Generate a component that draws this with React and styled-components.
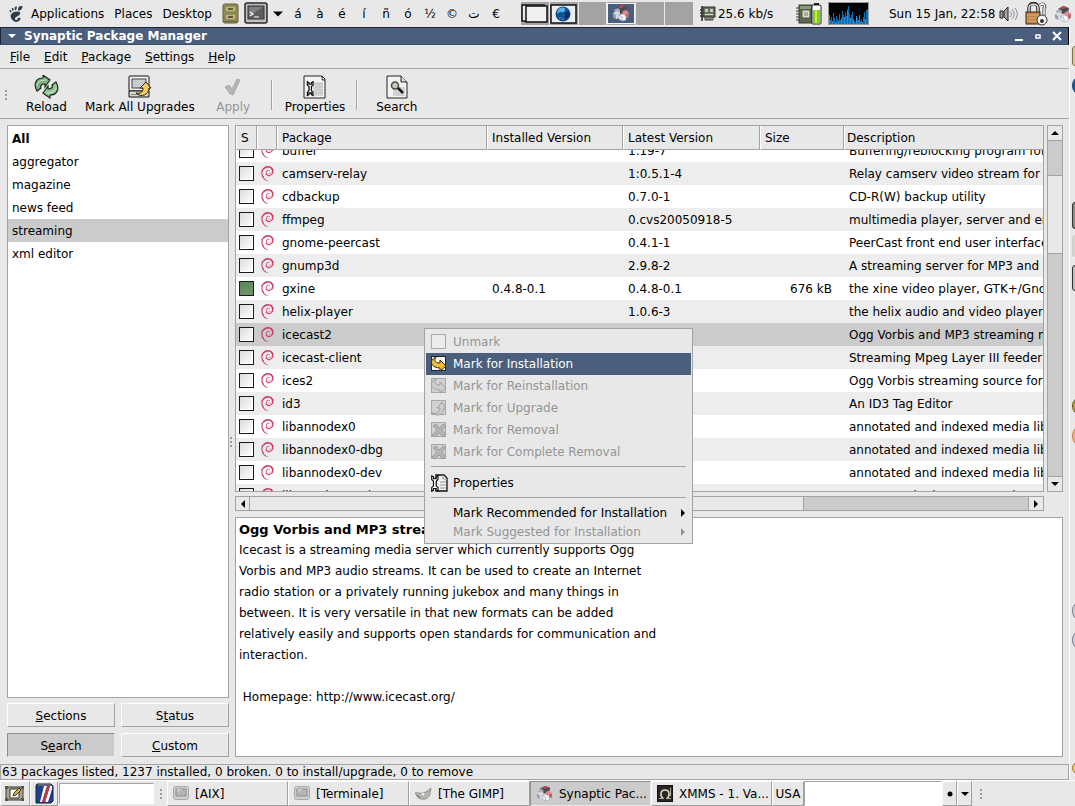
import React, { useLayoutEffect, useRef } from "react";
import styled, { createGlobalStyle, css } from "styled-components";
import { SiDebian, SiGnome } from "react-icons/si";

const c = {
  bg: "#e8e8e8",
  line: "#a3a3a3",
  navy: "#4a5f7e",
  sel: "#cbcbcb",
  dim: "#949494",
};

const Global = createGlobalStyle`
  * { box-sizing: border-box; }
  body { margin: 0; background: ${c.bg}; }
  body, button, input, table {
    font-family: "DejaVu Sans", "Bitstream Vera Sans", sans-serif;
    font-size: 12px;
    line-height: 16px;
    color: #000;
  }
  button { margin: 0; padding: 0; border: 0; background: none; }
  svg { display: block; flex: none; }
  u { text-underline-offset: 1px; }
`;

const Screen = styled.div`
  position: relative;
  display: flex;
  flex-direction: column;
  height: 100vh;
  min-height: 600px;
  overflow: hidden;
`;

/* ---------- panels ---------- */
const Panel = styled.div`
  display: flex;
  flex: none;
  align-items: center;
  height: 27px;
  white-space: nowrap;
  overflow: hidden;
`;
const TopPanel = styled(Panel)`
  padding: 0 2px 0 8px;
`;
const PanelMenu = styled.nav`
  display: flex;
  gap: 10px;
  margin: 0 10px 0 7px;
`;
const Launcher = styled.button`
  margin-right: 5px;
`;
const CharPalette = styled.div`
  display: flex;
  margin-left: 4px;
  button { width: 22px; }
`;
const Pager = styled.div`
  display: flex;
  gap: 1px;
  margin-left: 14px;
  width: 172px;
  height: 23px;
  background: ${c.bg};
`;
const Desk = styled.button`
  flex: 1;
  display: flex;
  align-items: center;
  justify-content: center;
  background: #a3a3a3;
`;
const NetMonitor = styled.span`
  display: flex;
  align-items: center;
  gap: 2px;
  width: 96px;
  margin-left: 7px;
`;
const Clock = styled.time`
  margin: 0 4px 0 20px;
`;
const Tray = styled.div`
  display: flex;
  align-items: center;
  gap: 6px;
`;

/* ---------- window ---------- */
const Workspace = styled.div`
  position: relative;
  display: flex;
  flex: 1;
  min-height: 0;
`;
const Window = styled.main`
  display: flex;
  flex: 1;
  flex-direction: column;
  min-width: 0;
`;
const TitleBar = styled.header`
  display: flex;
  align-items: center;
  height: 18px;
  padding: 0 5px 0 7px;
  background: ${c.navy};
  border-top: 1px solid #1c2634;
  border-bottom: 1px solid #3e506b;
  border-left: 1px solid #1c2634;
  border-right: 1px solid #000;
  color: #fff;
  h1 {
    flex: 1;
    margin: 0 0 0 8px;
    font-size: 12px;
    line-height: 16px;
  }
  button { margin-left: 8px; }
`;
const MenuBar = styled.nav`
  display: flex;
  align-items: center;
  gap: 14px;
  height: 24px;
  padding: 1px 10px 0;
  border-bottom: 1px solid ${c.line};
`;
const Toolbar = styled.div`
  display: flex;
  align-items: center;
  height: 50px;
  padding: 2px 0 0 4px;
  border-bottom: 1px solid ${c.line};
`;
const ToolButton = styled.button`
  display: flex;
  flex-direction: column;
  align-items: center;
  min-width: 65px;
  padding: 0 6px;
  &:disabled { color: ${c.dim}; }
`;
const ToolSeparator = styled.div`
  width: 2px;
  height: 30px;
  margin: 0 6px 0 5px;
  border-left: 1px solid ${c.line};
  border-right: 1px solid #f6f6f6;
`;
const Grip = styled.div`
  width: ${(p) => p.$width || 10}px;
  height: 11px;
  flex: none;
  background: radial-gradient(circle at 2px 2px, #9a9a9a 1px, transparent 1px) 0 0 / 3px 4px repeat-y;
`;
const Body = styled.div`
  display: flex;
  flex: 1;
  min-height: 0;
  padding: 6px 6px 7px 7px;
`;
const Splitter = styled.div`
  display: flex;
  align-items: center;
  flex: none;
  width: 6px;
`;
const Sidebar = styled.aside`
  display: flex;
  flex: none;
  flex-direction: column;
  gap: 5px;
  width: 222px;
`;
const CategoryList = styled.ul`
  flex: 1;
  margin: 0;
  padding: 1px 0;
  list-style: none;
  background: #fff;
  border: 1px solid ${c.line};
`;
const Category = styled.button`
  display: block;
  width: 100%;
  height: 23px;
  padding: 0 4px;
  text-align: left;
  font-weight: ${(p) => (p.$bold ? "bold" : "normal")};
  background: ${(p) => (p.$active ? c.sel : "transparent")};
`;
const Filters = styled.div`
  display: grid;
  grid-template-columns: 1fr 1fr;
  gap: 6px;
`;
const bevel = css`
  border: 1px solid;
  border-color: #fff #a0a0a0 #a0a0a0 #fff;
`;
const FilterButton = styled.button`
  height: 24px;
  padding-top: 2px;
  ${bevel}
  background: ${c.bg};
  &[aria-pressed="true"] {
    background: ${c.sel};
    border-color: #8e8e8e #e8e8e8 #e8e8e8 #8e8e8e;
  }
`;
const Content = styled.section`
  display: flex;
  flex: 1;
  flex-direction: column;
  gap: 6px;
  min-width: 0;
`;
const ListGrid = styled.div`
  display: grid;
  flex: 1;
  grid-template: minmax(0, 1fr) 15px / minmax(0, 1fr) 16px;
  gap: 4px 3px;
  min-height: 0;
`;
const TableView = styled.div`
  overflow: hidden;
  background: #fff;
  border: 1px solid ${c.line};
`;
const Table = styled.table`
  width: 100%;
  table-layout: fixed;
  border-spacing: 0;
  th, td {
    overflow: hidden;
    height: 23px;
    padding: 0 0 0 5px;
    white-space: nowrap;
    text-align: left;
    font-weight: normal;
  }
  thead th {
    position: sticky;
    top: 0;
    z-index: 1;
    height: 24px;
    padding-top: 1px;
    padding-left: 4px;
    background: ${c.bg};
    border-right: 1px solid ${c.line};
    border-bottom: 1px solid ${c.line};
    border-left: 1px solid #fff;
  }
  thead th:last-child { padding-left: 2px; border-right: 0; }
  td:nth-child(-n + 2) { padding-left: 3px; }
  td:nth-child(6) { padding-right: 12px; text-align: right; }
`;
const Row = styled.tr`
  background: ${(p) => (p.$selected ? c.sel : p.$striped ? "#ededed" : "#fff")};
`;
const StatusBox = styled.input`
  appearance: none;
  display: block;
  width: 15px;
  height: 15px;
  margin: 0;
  border: 1px solid #1a1a1a;
  background: linear-gradient(135deg, #dcdcdc, #fff);
  box-shadow: inset -1px -1px #fff;
  &:checked {
    background: linear-gradient(160deg, #5a8558, #6f9a6b);
    box-shadow: none;
  }
`;
const Scroll = styled.div`
  display: flex;
  flex-direction: ${(p) => (p.$vertical ? "column" : "row")};
  background: ${c.sel};
  border: 1px solid ${c.line};
`;
const ScrollArrow = styled.button`
  display: flex;
  align-items: center;
  justify-content: center;
  flex: 0 0 14px;
  background: ${c.bg};
  box-shadow: 0 0 0 1px ${c.line};
`;
const ScrollSpace = styled.div`
  flex: ${(p) => p.$size} 0 0;
`;
const ScrollThumb = styled.div`
  flex: ${(p) => p.$size} 0 0;
  background: ${c.bg};
  box-shadow: 0 0 0 1px ${c.line};
`;
const Details = styled.article`
  flex: none;
  height: 240px;
  padding: 2px 3px;
  background: #fff;
  border: 1px solid ${c.line};
  overflow: hidden;
  white-space: nowrap;
  h2 { margin: 0; font-size: 13px; line-height: 20px; }
  p { margin: 0 0 21px; line-height: 21px; }
`;
const StatusBar = styled.footer`
  height: 16px;
  padding-left: 1px;
  line-height: 15px;
  border: 1px solid ${c.line};
  white-space: nowrap;
`;

/* ---------- desktop edge ---------- */
const DesktopEdge = styled.div`
  position: relative;
  flex: none;
  width: 6px;
  overflow: hidden;
  border-left: 1px solid #fff;
`;
const DesktopIcon = styled.div`
  position: absolute;
  left: 2px;
  top: ${(p) => p.$top}px;
  width: ${(p) => p.$size}px;
  height: ${(p) => p.$size}px;
  border: 1px solid ${(p) => p.$edge};
  border-radius: ${(p) => (p.$round ? "50%" : "3px")};
  background: ${(p) => p.$fill};
`;

/* ---------- context menu ---------- */
const ContextMenu = styled.div`
  position: absolute;
  left: 424px;
  top: 328px;
  width: 269px;
  padding: 2px 1px;
  background: ${c.bg};
  border: 1px solid ${c.line};
  z-index: 5;
  hr {
    height: 1px;
    margin: 3px 5px 5px;
    border: 0;
    background: ${c.line};
  }
`;
const MenuItem = styled.button`
  display: flex;
  align-items: center;
  width: 100%;
  height: ${(p) => (p.$short ? 19 : 22)}px;
  padding: 0 4px 0 5px;
  text-align: left;
  white-space: nowrap;
  background: ${(p) => (p.$active ? c.navy : "transparent")};
  color: ${(p) => (p.$active ? "#fff" : "#000")};
  &:disabled { color: ${c.dim}; }
`;
const MenuIcon = styled.span`
  width: 16px;
  margin-right: 6px;
`;
const MenuLabel = styled.span`
  flex: 1;
`;

/* ---------- task bar ---------- */
const BottomPanel = styled(Panel)`
  height: 26px;
  align-items: stretch;
  border-top: 1px solid #fff;
`;
const PanelButton = styled.button`
  display: flex;
  flex: none;
  align-items: center;
  justify-content: center;
  width: ${(p) => p.$width}px;
  ${bevel}
`;
const TextEntry = styled.input`
  width: ${(p) => p.$width}px;
  margin: ${(p) => (p.$inset ? "2px 5px 2px 1px" : "0")};
  border: 1px solid;
  border-color: ${c.line} #fff #fff ${c.line};
  background: #fff;
`;
const Task = styled.button`
  display: flex;
  align-items: center;
  gap: 6px;
  flex: 0 1 121px;
  padding-left: 5px;
  ${bevel}
  background: ${(p) => (p.$active ? c.sel : c.bg)};
  ${(p) => p.$active && css`border-color: #8e8e8e #e8e8e8 #e8e8e8 #8e8e8e;`}
`;
const GripSlot = styled.span`
  display: flex;
  align-items: center;
`;
const EndGripSlot = styled(GripSlot)`
  margin-left: 7px;
`;

/* ---------- drawings ---------- */
const Arrow = ({ dir, color = "#000", size = 8 }) => (
  <svg width={size} height={size} viewBox="0 0 8 8">
    <path
      fill={color}
      d={{ up: "M0 6 4 2 8 6z", down: "M0 2h8L4 6z", left: "M6 0v8L2 4z", right: "M2 0v8L6 4z" }[dir]}
    />
  </svg>
);
const Cubes = ({ size = 18 }) => (
  <svg width={size} height={size} viewBox="0 0 18 18">
    <path d="m4 4 5-3 6 2-1 5-6 1z" fill="#4c4a50" />
    <path d="m6 3 4-2 3 1-4 2z" fill="#d8434b" />
    <path d="m2 6 4-2 2 2v4l-4 1z" fill="#a9acb4" />
    <path d="m1 9 4-2 3 2v5l-4 1-3-2z" fill="#d9d9df" />
    <path d="m1 9 3 2v4l-3-2z" fill="#9b9aa5" />
    <path d="m11 7 3-1 3 3v4l-3 1-4-3z" fill="#e08a8d" />
    <path d="m14 10 3-1v4l-3 1z" fill="#b5686d" />
    <path d="m7 11 4-1 3 2v4l-4 1-3-2z" fill="#fafafa" stroke="#9aa7c0" strokeWidth=".6" />
    <path d="m7 11 3 2v4" fill="none" stroke="#8791a6" strokeWidth=".7" />
  </svg>
);
const Cabinet = () => (
  <svg width="17" height="21" viewBox="0 0 17 21">
    <rect x="1" y="1" width="15" height="19" rx="2" fill="#a39a60" stroke="#5d5834" />
    <path d="M3 3h11v6H3zM3 11h11v6H3z" fill="#bdb57d" stroke="#777044" />
    <path d="M6 5h5v2H6zM6 13h5v2H6z" fill="#5f5a38" />
    <path d="M2 18.500h13" stroke="#6d673f" />
  </svg>
);
const Terminal = () => (
  <svg width="24" height="23" viewBox="0 0 24 23">
    <rect x="1" y="1" width="22" height="20" rx="2" fill="#bdbdb9" stroke="#2b2b2b" strokeWidth="1.500" />
    <rect x="4" y="4" width="16" height="13" fill="#5c5f5c" stroke="#3a3a3a" />
    <path d="M5 5h14L5 14z" fill="#7d807d" />
    <path d="m6 10 3 2-3 2M10 15h5" fill="none" stroke="#fff" strokeWidth="1.200" />
  </svg>
);
const Pages = () => (
  <svg width="27" height="19" viewBox="0 0 27 19">
    <path d="M1 1h22v16H1z" fill="#e8e8e8" stroke="#111" strokeWidth="1.500" />
    <path d="M5 2h21v16H5z" fill="#f0f0f0" stroke="#111" strokeWidth="1.500" />
  </svg>
);
const GlobeWindow = () => (
  <svg width="27" height="20" viewBox="0 0 27 20">
    <rect x="1" y="1" width="25" height="18" fill="#ededed" stroke="#111" strokeWidth="1.500" />
    <circle cx="13" cy="10" r="7.500" fill="#154f92" />
    <path d="M8 6c2-3 6-3 7-1s-2 4-4 3-2 2-4 1z" fill="#54b4e4" />
    <path d="M16 8c3-1 4 1 3 4s-4 3-4 1 0-4 1-5z" fill="#0b2d62" />
    <path d="M9 14c2-1 4 0 4 2" stroke="#3e96d4" fill="none" />
  </svg>
);
const CubesWindow = () => (
  <svg width="28" height="21" viewBox="0 0 28 21">
    <rect x=".5" y=".5" width="27" height="20" fill={c.navy} stroke="#f4f4f4" />
    <svg x="5" y="1" width="18" height="18" viewBox="0 0 18 18"><Cubes /></svg>
  </svg>
);
const NetCard = () => (
  <svg width="16" height="17" viewBox="0 0 16 17">
    <path d="M0 5h2M0 8h2M0 11h2" stroke="#333" strokeWidth="1.500" />
    <path d="M2 1v15" stroke="#222" strokeWidth="1.500" />
    <rect x="3" y="2" width="12" height="10" fill="#65705c" stroke="#2f352b" />
    <path d="M5 4h3v3H5zM10 4h3v3h-3z" fill="#c6cdbb" />
    <path d="M5 9.500h8" stroke="#e4e4d8" />
    <path d="M5 12v3h8v-3M7 12v3M9 12v3M11 12v3" fill="none" stroke="#333" />
  </svg>
);
const Battery = () => (
  <svg width="26" height="22" viewBox="0 0 26 22">
    <path d="M0 5h4M0 8h4M0 11h4M0 14h4M0 17h4" stroke="#3a4230" />
    <rect x="3" y="2" width="13" height="18" fill="#5d6950" stroke="#35402e" />
    <path d="M4 3h11v3H4z" fill="#8b9878" />
    <rect x="6" y="7" width="8" height="8" fill="#dcdccc" stroke="#4c5540" />
    <path d="M8 9h4v4H8z" fill="#a9ae98" />
    <rect x="16" y="2" width="9" height="19" rx="1" fill="#fff" stroke="#222" />
    <path d="M17 7h7v13h-7z" fill="#86cf10" />
    <path d="M19 7h2v13h-2z" fill="#b7ee52" />
    <path d="M18 1h5" stroke="#222" strokeWidth="2" />
  </svg>
);
const load = [9, 4, 7, 3, 11, 6, 2, 8, 5, 3, 10, 4, 6, 13, 9, 7, 12, 8, 14, 18, 11, 6, 9, 12, 5, 3, 2, 8, 6, 4, 9, 3, 5, 2, 7, 12, 5, 14, 15];
const LoadGraph = () => (
  <svg width="41" height="23" viewBox="0 0 41 23">
    <rect x=".5" y=".5" width="40" height="22" fill="#000" stroke="#999" />
    {load.map((v, i) => (
      <rect key={i} x={i + 1} y={22 - v} width="1" height={v} fill={i % 3 ? "#0a72bd" : "#2b8fd4"} />
    ))}
  </svg>
);
const Speaker = () => (
  <svg width="20" height="16" viewBox="0 0 20 16">
    <path d="M1 5h3v7H1zM5 5l4-4v14l-4-4z" fill="#a5a5a5" stroke="#222" />
    <path d="M11 5c2 2 2 4 0 6M13 3c3 3 3 7 0 10M16 2c3 4 3 8 0 12" fill="none" stroke="#8d8aa0" />
  </svg>
);
const LockKeys = () => (
  <svg width="23" height="24" viewBox="0 0 23 24">
    <path d="M4 10V6c0-6 9-6 9 0v4" fill="none" stroke="#222" strokeWidth="3.500" />
    <path d="M4 10V6c0-5 9-5 9 0v4" fill="none" stroke="#ddd" strokeWidth="1.500" />
    <rect x="1" y="10" width="14" height="12" fill="#bd8348" stroke="#402810" />
    <path d="M2 13h12M2 16h12M2 19h12" stroke="#e0ae78" />
    <path d="M15 3c3-3 6 1 4 3v9" fill="none" stroke="#444" strokeWidth="3" />
    <path d="M15 3c3-3 6 1 4 3v9" fill="none" stroke="#f4f4f4" strokeWidth="1.500" />
    <circle cx="17" cy="18" r="5" fill="#f6f6f6" stroke="#333" />
    <circle cx="17" cy="19" r="2" fill="#333" />
  </svg>
);
const Reload = () => (
  <svg width="25" height="24" viewBox="0 0 25 24">
    <path d="M3 16C-1 9 2 3 9 3V0l7 5-5 7V9c-4 0-5 2-4 4z" fill="#7fae82" stroke="#17301b" strokeWidth="1.200" />
    <path d="M22 7c4 7 1 13-6 13v3l-7-5 5-7v3c4 0 5-2 4-4z" fill="#94c493" stroke="#17301b" strokeWidth="1.200" />
    <path d="M3 11c0-4 3-6 9-6M22 12c0 4-3 6-9 6" fill="none" stroke="#cfebcc" />
  </svg>
);
const Upgrades = () => (
  <svg width="24" height="24" viewBox="0 0 24 24">
    <rect x="1" y="1" width="20" height="15" rx="1" fill="#f2f2f2" stroke="#111" />
    <rect x="4" y="4" width="14" height="9" fill="#c9cbd3" stroke="#444" />
    <path d="M1 16h20v6H1z" fill="#d7d7d2" stroke="#111" />
    <path d="M3 19.500h8" stroke="#888" />
    <path d="M8 18c5 1 7-1 7-5h-3l6-6 5 6h-2c0 7-8 10-13 5z" fill="#f3cd5f" stroke="#2e240c" />
  </svg>
);
const Check = () => (
  <svg width="24" height="24" viewBox="0 0 24 24">
    <path d="m4 12 4-2 3 4 5-10 3 1-7 15-3-1z" fill="#b5b5b5" stroke="#9c9c9c" strokeWidth=".7" />
  </svg>
);
const wrench = "M3 1v4l2 2v5l-2 2v4l2-1v-2h3v2l2 1v-4l-2-2V7l2-2V1L8 2v2H5V2z";
const PropertiesIcon = () => (
  <svg width="24" height="24" viewBox="0 0 24 24">
    <path d="M1 1h18l3 3v19H1z" fill="#f4f4f4" stroke="#222" />
    <path d="M10 7h10v14H10z" fill="#d6d6d6" />
    <path d="M12 9h8M12 12h8M12 15h8M12 18h8" stroke="#bbb" />
    <path d="m19 1 .3 4H22" fill="none" stroke="#222" />
    <path transform="translate(2 6) scale(.8)" d={wrench} fill="#fff" stroke="#111" strokeWidth="1.600" />
  </svg>
);
const SearchIcon = () => (
  <svg width="24" height="24" viewBox="0 0 24 24">
    <path d="M2 1h14l6 6v16H2z" fill="#f3f3f3" stroke="#222" />
    <path d="M8 12h12v9H8z" fill="#d2d2d2" />
    <path d="M16 1v6h6" fill="#ddd" stroke="#222" />
    <circle cx="10" cy="10.500" r="3.500" fill="#c9cbb8" stroke="#4a4a44" strokeWidth="1.500" />
    <path d="m13 13 5 5" stroke="#111" strokeWidth="2.500" />
  </svg>
);
const MarkIcon = ({ kind }) => {
  if (kind === "empty")
    return <svg width="16" height="16"><rect x=".5" y=".5" width="14" height="14" fill="#ececec" stroke="#aaa" /></svg>;
  if (kind === "props")
    return (
      <svg width="17" height="18" viewBox="0 0 17 18">
        <path d="M5 1h8l3 3v13H5z" fill="#eee" stroke="#111" strokeWidth="1.300" />
        <path d="M12 1v4h4M9 8h6M9 11h6M9 14h6" fill="none" stroke="#999" />
        <path transform="translate(-2 1) scale(.9)" d={wrench} fill="#fff" stroke="#111" strokeWidth="1.300" />
      </svg>
    );
  const on = kind === "install";
  const arrow = "M6 0C3 3 3 6 7 7l2 0V4l6 6-6 5v-3C2 12-2 7 2 3z";
  const shape = {
    install: arrow,
    reinstall: arrow,
    upgrade: "M1 13c4 1 8 0 8-5H6l5-6 4 6h-2c0 7-7 9-12 5z",
    remove: "m2 4 3-2 3 4 4-4 3 2-4 4 4 5-3 2-4-4-4 4-3-2 5-5z",
  }[kind];
  return (
    <svg width="16" height="16" viewBox="0 0 16 16">
      <rect x=".5" y=".5" width="14" height="14" fill={on ? "#f5f5f5" : "#d2d2d2"} stroke={on ? "#222" : "#a8a8a8"} />
      <path d={shape} fill={on ? "#f0bd35" : kind === "remove" ? "#b4b4b4" : "#cdcdcd"} stroke={on ? "#3d2c07" : "#a0a0a0"} />
    </svg>
  );
};
const ShowDesktop = () => (
  <svg width="20" height="17" viewBox="0 0 20 17">
    <rect x="1" y="2" width="17" height="13" fill="#a8a58c" stroke="#3b3a2d" />
    <path d="M0 1h3v3H0zM16 1h3v3h-3zM0 13h3v3H0zM16 13h3v3h-3z" fill="#5a5948" />
    <path d="M5 4h9v9H5z" fill="#fff" stroke="#333" />
    <path d="m8 11 1-3 5-5 2 2-5 5z" fill="#d9b04c" stroke="#443718" />
  </svg>
);
const Dictionary = () => (
  <svg width="19" height="21" viewBox="0 0 19 21">
    <path d="M2 1h14l2 2v15l-2 2H1V3z" fill="#1f408c" stroke="#1a1f3a" />
    <path d="m9 3-4 16h2l5-16zM15 3l-5 16h3l4-13V3z" fill="#fff" />
    <path d="m12 3-5 16h3l5-16z" fill="#c43540" />
    <path d="M3 2h13" stroke="#777" strokeWidth="1.500" />
  </svg>
);
const GreyTerminal = () => (
  <svg width="16" height="15" viewBox="0 0 16 15">
    <rect x=".5" y=".5" width="15" height="13" rx="2" fill="#cfcfcf" stroke="#aaa" />
    <rect x="3" y="3" width="10" height="7" fill="#b5b5b5" stroke="#8e8e8e" />
    <path d="m4 7 5-4H4z" fill="#ccc" />
  </svg>
);
const Gimp = () => (
  <svg width="17" height="14" viewBox="0 0 17 14">
    <path d="M0 6c3-1 4 1 7 0l4-1 5-4-1 5c0 4-4 7-8 6-4 0-5-3-7-6z" fill="#b5b4ad" stroke="#96958e" />
    <circle cx="8" cy="7" r="1.500" fill="#eee" />
    <path d="m2 8 3 3" stroke="#666" />
  </svg>
);
const Xmms = () => (
  <svg width="16" height="17" viewBox="0 0 16 17">
    <rect x=".5" y=".5" width="15" height="16" fill="#292723" stroke="#111" />
    <path d="M6 13c-3-2-3-8 2-8s5 6 2 8" fill="none" stroke="#e2dac8" strokeWidth="1.500" />
    <path d="M2 13.500h5M9 13.500h5M13.500 3v8" fill="none" stroke="#b5ad9b" />
  </svg>
);

/* ---------- data ---------- */
const palette = ["á", "à", "é", "í", "ñ", "ó", "½", "©", "ت", "€"];
const categories = ["All", "aggregator", "magazine", "news feed", "streaming", "xml editor"];
const packages = [
  ["buffer", "", "1.19-7", "", "Buffering/reblocking program for tape backup"],
  ["camserv-relay", "", "1:0.5.1-4", "", "Relay camserv video stream for large audiences"],
  ["cdbackup", "", "0.7.0-1", "", "CD-R(W) backup utility"],
  ["ffmpeg", "", "0.cvs20050918-5", "", "multimedia player, server and encoder"],
  ["gnome-peercast", "", "0.4.1-1", "", "PeerCast front end user interface for GNOME"],
  ["gnump3d", "", "2.9.8-2", "", "A streaming server for MP3 and OGG files"],
  ["gxine", "0.4.8-0.1", "0.4.8-0.1", "676 kB", "the xine video player, GTK+/Gnome user interface"],
  ["helix-player", "", "1.0.6-3", "", "the helix audio and video player"],
  ["icecast2", "", "", "", "Ogg Vorbis and MP3 streaming media server"],
  ["icecast-client", "", "", "", "Streaming Mpeg Layer III feeder"],
  ["ices2", "", "", "", "Ogg Vorbis streaming source for Icecast 2"],
  ["id3", "", "", "", "An ID3 Tag Editor"],
  ["libannodex0", "", "", "", "annotated and indexed media library"],
  ["libannodex0-dbg", "", "", "", "annotated and indexed media library"],
  ["libannodex0-dev", "", "", "", "annotated and indexed media library"],
  ["libapache-mod-mp3", "", "", "", "turns Apache into a streaming audio server"],
];
const menu = [
  { label: "Unmark", icon: "empty", off: true },
  { label: "Mark for Installation", icon: "install", active: true },
  { label: "Mark for Reinstallation", icon: "reinstall", off: true },
  { label: "Mark for Upgrade", icon: "upgrade", off: true },
  { label: "Mark for Removal", icon: "remove", off: true },
  { label: "Mark for Complete Removal", icon: "remove", off: true },
  null,
  { label: "Properties", icon: "props" },
  null,
  { label: "Mark Recommended for Installation", sub: true },
  { label: "Mark Suggested for Installation", sub: true, off: true },
];
const desktopIcons = [
  [19, 20, "#80724f", "#d6c79e", false],
  [48, 21, "#0c3564", "#1260ae", true],
  [175, 27, "#333", "#8b8b86", false],
  [208, 22, "#ccc", "#d5d5d0", false],
  [238, 26, "#333", "#bbb", false],
  [369, 20, "#5f4a1c", "#c79a2c", true],
  [397, 24, "#c77a44", "#f6b07c", true],
  [573, 22, "#77777f", "#d5d5df", true],
  [602, 22, "#77777f", "#d5d5df", true],
  [735, 12, "#8b7324", "#efd070", true],
];

const Mnemonic = ({ text, at = 0 }) => (
  <>
    {text.slice(0, at)}
    <u>{text[at]}</u>
    {text.slice(at + 1)}
  </>
);

function PackageTable() {
  const view = useRef(null);
  useLayoutEffect(() => {
    view.current.scrollTop = 11;
  }, []);
  return (
    <TableView ref={view}>
      <Table>
        <colgroup>
          <col style={{ width: 21 }} />
          <col style={{ width: 20 }} />
          <col style={{ width: 210 }} />
          <col style={{ width: 136 }} />
          <col style={{ width: 137 }} />
          <col style={{ width: 84 }} />
          <col />
        </colgroup>
        <thead>
          <tr>
            <th>S</th>
            <th aria-label="Supported" />
            <th>Package</th>
            <th>Installed Version</th>
            <th>Latest Version</th>
            <th>Size</th>
            <th>Description</th>
          </tr>
        </thead>
        <tbody>
          {packages.map(([name, installed, latest, size, text], i) => (
            <Row key={name} $striped={i % 2 === 1} $selected={name === "icecast2"}>
              <td>
                <StatusBox type="checkbox" aria-label={name} defaultChecked={!!installed} />
              </td>
              <td>
                <SiDebian size={15} color="#c8305f" strokeWidth=".4" />
              </td>
              <td>{name}</td>
              <td>{installed}</td>
              <td>{latest}</td>
              <td>{size}</td>
              <td>{text}</td>
            </Row>
          ))}
        </tbody>
      </Table>
    </TableView>
  );
}

export default function App() {
  return (
    <Screen>
      <Global />
      <TopPanel>
        <SiGnome size={16} color="#2e3c46" />
        <PanelMenu aria-label="Desktop">
          <button>Applications</button>
          <button>Places</button>
          <button>Desktop</button>
        </PanelMenu>
        <Launcher aria-label="File manager"><Cabinet /></Launcher>
        <Launcher aria-label="Terminal"><Terminal /></Launcher>
        <button aria-label="Character sets"><Arrow dir="down" size={10} /></button>
        <CharPalette>
          {palette.map((ch) => <button key={ch}>{ch}</button>)}
        </CharPalette>
        <Pager>
          <Desk aria-label="Workspace 1"><Pages /></Desk>
          <Desk aria-label="Workspace 2"><GlobeWindow /></Desk>
          <Desk aria-label="Workspace 3" />
          <Desk aria-label="Workspace 4"><CubesWindow /></Desk>
          <Desk aria-label="Workspace 5" />
          <Desk aria-label="Workspace 6" />
        </Pager>
        <NetMonitor>
          <NetCard />
          25.6 kb/s
        </NetMonitor>
        <Tray>
          <Battery />
          <LoadGraph />
        </Tray>
        <Clock>Sun 15 Jan, 22:58</Clock>
        <Tray>
          <Speaker />
          <LockKeys />
          <Cubes />
        </Tray>
      </TopPanel>

      <Workspace>
        <Window>
          <TitleBar>
            <Arrow dir="down" color="#fff" />
            <h1>Synaptic Package Manager</h1>
            <button aria-label="Minimise">
              <svg width="11" height="11"><path d="M1 9h8" stroke="#fff" strokeWidth="2" /></svg>
            </button>
            <button aria-label="Maximise">
              <svg width="11" height="11"><rect x="3" y="4" width="4" height="3" fill="none" stroke="#fff" strokeWidth="1.500" /></svg>
            </button>
            <button aria-label="Close">
              <svg width="11" height="11"><path d="m1 1 8 8M9 1 1 9" stroke="#fff" strokeWidth="2" /></svg>
            </button>
          </TitleBar>
          <MenuBar aria-label="Application">
            {["File", "Edit", "Package", "Settings", "Help"].map((m) => (
              <button key={m}><Mnemonic text={m} /></button>
            ))}
          </MenuBar>
          <Toolbar>
            <Grip />
            <ToolButton><Reload />Reload</ToolButton>
            <ToolButton><Upgrades />Mark All Upgrades</ToolButton>
            <ToolButton disabled><Check />Apply</ToolButton>
            <ToolSeparator />
            <ToolButton><PropertiesIcon />Properties</ToolButton>
            <ToolSeparator />
            <ToolButton><SearchIcon />Search</ToolButton>
          </Toolbar>
          <Body>
            <Sidebar>
              <CategoryList>
                {categories.map((name) => (
                  <li key={name}>
                    <Category $bold={name === "All"} $active={name === "streaming"}>{name}</Category>
                  </li>
                ))}
              </CategoryList>
              <Filters>
                <FilterButton><Mnemonic text="Sections" /></FilterButton>
                <FilterButton><Mnemonic text="Status" at={1} /></FilterButton>
                <FilterButton aria-pressed="true"><Mnemonic text="Search" at={1} /></FilterButton>
                <FilterButton><Mnemonic text="Custom" /></FilterButton>
              </Filters>
            </Sidebar>
            <Splitter><Grip $width={6} /></Splitter>
            <Content>
              <ListGrid>
                <PackageTable />
                <Scroll $vertical>
                  <ScrollArrow aria-label="Scroll up"><Arrow dir="up" /></ScrollArrow>
                  <ScrollSpace $size={36} />
                  <ScrollThumb $size={77} />
                  <ScrollSpace $size={224} />
                  <ScrollArrow aria-label="Scroll down"><Arrow dir="down" /></ScrollArrow>
                </Scroll>
                <Scroll>
                  <ScrollArrow aria-label="Scroll left"><Arrow dir="left" /></ScrollArrow>
                  <ScrollThumb $size={552} />
                  <ScrollSpace $size={226} />
                  <ScrollArrow aria-label="Scroll right"><Arrow dir="right" /></ScrollArrow>
                </Scroll>
              </ListGrid>
              <Details>
                <h2>Ogg Vorbis and MP3 streaming media server</h2>
                <p>
                  Icecast is a streaming media server which currently supports Ogg<br />
                  Vorbis and MP3 audio streams. It can be used to create an Internet<br />
                  radio station or a privately running jukebox and many things in<br />
                  between. It is very versatile in that new formats can be added<br />
                  relatively easily and supports open standards for communication and<br />
                  interaction.
                </p>
                <p>&nbsp;Homepage: http://www.icecast.org/</p>
              </Details>
            </Content>
          </Body>
          <StatusBar>
            63 packages listed, 1237 installed, 0 broken. 0 to install/upgrade, 0 to remove
          </StatusBar>
        </Window>
        <DesktopEdge>
          {desktopIcons.map(([top, size, edge, fill, round]) => (
            <DesktopIcon key={top} $top={top} $size={size} $edge={edge} $fill={fill} $round={round} />
          ))}
        </DesktopEdge>
      </Workspace>

      <BottomPanel>
        <PanelButton $width={30} aria-label="Show desktop"><ShowDesktop /></PanelButton>
        <PanelButton $width={28} aria-label="Dictionary"><Dictionary /></PanelButton>
        <TextEntry $width={95} $inset aria-label="Look up" />
        <GripSlot><Grip $width={8} /></GripSlot>
        <Task><GreyTerminal />[AIX]</Task>
        <Task><GreyTerminal />[Terminale]</Task>
        <Task><Gimp />[The GIMP]</Task>
        <Task $active><Cubes size={17} />Synaptic Pac...</Task>
        <Task><Xmms />XMMS - 1. Va...</Task>
        <PanelButton $width={32}>USA</PanelButton>
        <TextEntry $width={138} aria-label="Command line" />
        <PanelButton $width={15} aria-label="Browse">
          <svg width="6" height="6"><circle cx="3" cy="3" r="2.500" /></svg>
        </PanelButton>
        <PanelButton $width={15} aria-label="History"><Arrow dir="down" /></PanelButton>
        <EndGripSlot><Grip $width={8} /></EndGripSlot>
      </BottomPanel>

      <ContextMenu role="menu">
        {menu.map((m, i) =>
          m ? (
            <MenuItem key={m.label} role="menuitem" disabled={m.off} $active={m.active} $short={m.sub}>
              <MenuIcon>{m.icon && <MarkIcon kind={m.icon} />}</MenuIcon>
              <MenuLabel>{m.label}</MenuLabel>
              {m.sub && <Arrow dir="right" color={m.off ? c.dim : "#000"} />}
            </MenuItem>
          ) : (
            <hr key={i} />
          )
        )}
      </ContextMenu>
    </Screen>
  );
}
